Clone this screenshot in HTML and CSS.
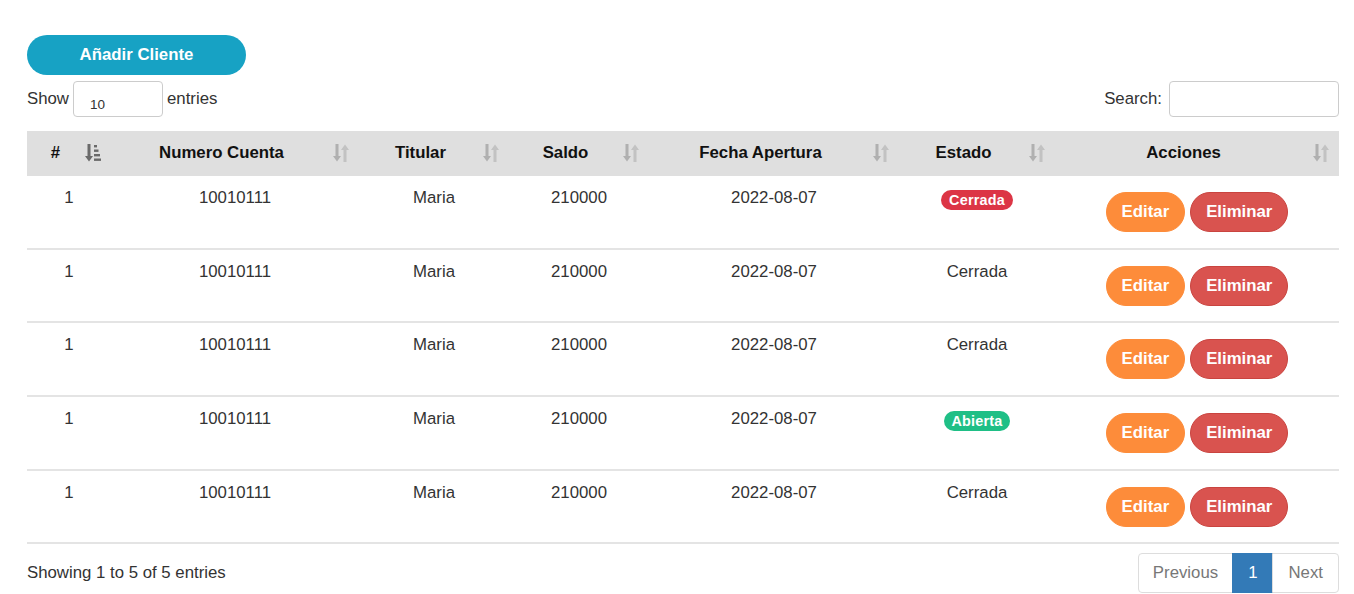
FILE: index.html
```html
<!DOCTYPE html>
<html lang="es">
<head>
<meta charset="utf-8">
<title>Cuentas</title>
<link rel="stylesheet" href="styles.css">
</head>
<body>
<div class="page">
  <button class="btn-add">Añadir Cliente</button>
  <div class="dt-top">
    <label class="dt-length">Show <span class="select">10</span> entries</label>
    <label class="dt-search">Search: <input class="search-input" type="search"></label>
  </div>
  <table class="dt">
    <colgroup>
      <col style="width:84px"><col style="width:248px"><col style="width:150px"><col style="width:140px"><col style="width:250px"><col style="width:156px"><col style="width:284px">
    </colgroup>
    <thead>
      <tr>
        <th><div class="th-in"><span class="th-text">#</span><svg class="sort sorted" viewBox="0 0 16 20" width="16" height="20"><path d="M2.5 1h3v12h2.5L4 18.5 0 13h2.5z"/><rect x="9" y="2" width="3" height="2.4"/><rect x="9" y="6.5" width="4.5" height="2.4"/><rect x="9" y="11" width="6" height="2.4"/><rect x="9" y="15.5" width="7" height="2.4"/></svg></div></th>
        <th><div class="th-in"><span class="th-text">Numero Cuenta</span><svg class="sort" viewBox="0 0 16 20" width="16" height="20"><path class="dn" d="M2.5 1h3v12h2.5L4 18.5 0 13h2.5z"/><path class="up" d="M10.5 19h3V7h2.5L12 1.5 8 7h2.5z"/></svg></div></th>
        <th><div class="th-in"><span class="th-text">Titular</span><svg class="sort" viewBox="0 0 16 20" width="16" height="20"><path class="dn" d="M2.5 1h3v12h2.5L4 18.5 0 13h2.5z"/><path class="up" d="M10.5 19h3V7h2.5L12 1.5 8 7h2.5z"/></svg></div></th>
        <th><div class="th-in"><span class="th-text">Saldo</span><svg class="sort" viewBox="0 0 16 20" width="16" height="20"><path class="dn" d="M2.5 1h3v12h2.5L4 18.5 0 13h2.5z"/><path class="up" d="M10.5 19h3V7h2.5L12 1.5 8 7h2.5z"/></svg></div></th>
        <th><div class="th-in"><span class="th-text">Fecha Apertura</span><svg class="sort" viewBox="0 0 16 20" width="16" height="20"><path class="dn" d="M2.5 1h3v12h2.5L4 18.5 0 13h2.5z"/><path class="up" d="M10.5 19h3V7h2.5L12 1.5 8 7h2.5z"/></svg></div></th>
        <th><div class="th-in"><span class="th-text">Estado</span><svg class="sort" viewBox="0 0 16 20" width="16" height="20"><path class="dn" d="M2.5 1h3v12h2.5L4 18.5 0 13h2.5z"/><path class="up" d="M10.5 19h3V7h2.5L12 1.5 8 7h2.5z"/></svg></div></th>
        <th><div class="th-in"><span class="th-text">Acciones</span><svg class="sort" viewBox="0 0 16 20" width="16" height="20"><path class="dn" d="M2.5 1h3v12h2.5L4 18.5 0 13h2.5z"/><path class="up" d="M10.5 19h3V7h2.5L12 1.5 8 7h2.5z"/></svg></div></th>
      </tr>
    </thead>
    <tbody>
      <tr>
        <td>1</td><td>10010111</td><td>Maria</td><td>210000</td><td>2022-08-07</td>
        <td><span class="badge badge-red">Cerrada</span></td>
        <td><div class="actions"><button class="btn btn-edit">Editar</button><button class="btn btn-del">Eliminar</button></div></td>
      </tr>
      <tr>
        <td>1</td><td>10010111</td><td>Maria</td><td>210000</td><td>2022-08-07</td>
        <td>Cerrada</td>
        <td><div class="actions"><button class="btn btn-edit">Editar</button><button class="btn btn-del">Eliminar</button></div></td>
      </tr>
      <tr>
        <td>1</td><td>10010111</td><td>Maria</td><td>210000</td><td>2022-08-07</td>
        <td>Cerrada</td>
        <td><div class="actions"><button class="btn btn-edit">Editar</button><button class="btn btn-del">Eliminar</button></div></td>
      </tr>
      <tr>
        <td>1</td><td>10010111</td><td>Maria</td><td>210000</td><td>2022-08-07</td>
        <td><span class="badge badge-green">Abierta</span></td>
        <td><div class="actions"><button class="btn btn-edit">Editar</button><button class="btn btn-del">Eliminar</button></div></td>
      </tr>
      <tr>
        <td>1</td><td>10010111</td><td>Maria</td><td>210000</td><td>2022-08-07</td>
        <td>Cerrada</td>
        <td><div class="actions"><button class="btn btn-edit">Editar</button><button class="btn btn-del">Eliminar</button></div></td>
      </tr>
    </tbody>
  </table>
  <div class="dt-bottom">
    <div class="dt-info">Showing 1 to 5 of 5 entries</div>
    <ul class="pagination">
      <li class="pg pg-disabled pg-prev">Previous</li>
      <li class="pg pg-active">1</li>
      <li class="pg pg-disabled">Next</li>
    </ul>
  </div>
</div>
</body>
</html>
```

FILE: styles.css
```css
* { box-sizing: border-box; }
html, body { margin: 0; padding: 0; background: #fff; }
body {
  font-family: "Liberation Sans", Arial, sans-serif;
  font-size: 16.8px;
  line-height: 24px;
  color: #333;
}
.page {
  padding: 35px 15px 0 27px;
  width: 1354px;
}
.btn-add {
  display: block;
  width: 219px;
  height: 40px;
  border: none;
  border-radius: 20px;
  background: #17a2c4;
  color: #fff;
  font-family: inherit;
  font-size: 16.8px;
  font-weight: bold;
  padding: 0;
  margin: 0 0 6px 0;
}
.dt-top {
  display: flex;
  justify-content: space-between;
  align-items: center;
  height: 36px;
}
.dt-length, .dt-search {
  display: flex;
  align-items: center;
  gap: 5px;
}
.select {
  display: inline-block;
  width: 90px;
  height: 36px;
  border: 1px solid #ccc;
  border-radius: 4px;
  font-size: 13.5px;
  line-height: 16px;
  padding: 15px 0 0 16px;
  color: #333;
}
.dt-length { gap: 4px; }
.search-input {
  width: 170px;
  height: 36px;
  border: 1px solid #ccc;
  border-radius: 4px;
  margin: 0 0 0 2px;
  padding: 0 8px;
  font-family: inherit;
}
.dt {
  width: 1312px;
  table-layout: fixed;
  border-collapse: collapse;
  margin-top: 14px;
}
.dt thead th {
  background: #dfdfdf;
  font-weight: bold;
  color: #111;
  padding: 10px 10px 11px 8px;
  line-height: 24px;
}
.th-in {
  display: flex;
  align-items: center;
  gap: 9px;
}
.th-text {
  flex: 1;
  text-align: center;
  white-space: nowrap;
}
.sort { flex: none; }
.sort .dn { fill: #b0b0b0; }
.sort .up { fill: #c2c2c2; }
.sort.sorted { fill: #6a6a6a; }
.dt tbody td {
  text-align: center;
  vertical-align: top;
  padding: 10px 8px 9.7px;
  border-bottom: 2px solid #e4e4e4;
  line-height: 24px;
}
.badge {
  display: inline-block;
  height: 20px;
  line-height: 20px;
  padding: 0 8px;
  border-radius: 10px;
  color: #fff;
  font-size: 14.4px;
  font-weight: bold;
  vertical-align: top;
  margin-top: 4px;
  letter-spacing: 0.2px;
}
.badge-red { background: #dc3545; }
.badge-green { background: #1fbf86; }
.actions {
  display: flex;
  justify-content: center;
  gap: 5px;
  margin: 6px 0 6px;
}
.btn {
  height: 40px;
  padding: 0 15px;
  border-radius: 20px;
  font-family: inherit;
  font-size: 16.8px;
  font-weight: bold;
  color: #fff;
  border: 1px solid transparent;
}
.btn-edit { background: #fd8c3a; border-color: #fd8c3a; }
.btn-del { background: #d9534f; border-color: #c9443f; }
.dt-bottom {
  display: flex;
  justify-content: space-between;
  align-items: center;
  margin-top: 9px;
}
.pagination {
  display: flex;
  list-style: none;
  margin: 0;
  padding: 0;
}
.pg {
  height: 40px;
  line-height: 38px;
  padding: 0 15px;
  border: 1px solid #ddd;
  margin-left: -1px;
  color: #777;
}
.pg-prev { padding: 0 14px; }
.pg:first-child { border-radius: 4px 0 0 4px; margin-left: 0; }
.pg:last-child { border-radius: 0 4px 4px 0; }
.pg-active { background: #337ab7; border-color: #337ab7; color: #fff; }
```
